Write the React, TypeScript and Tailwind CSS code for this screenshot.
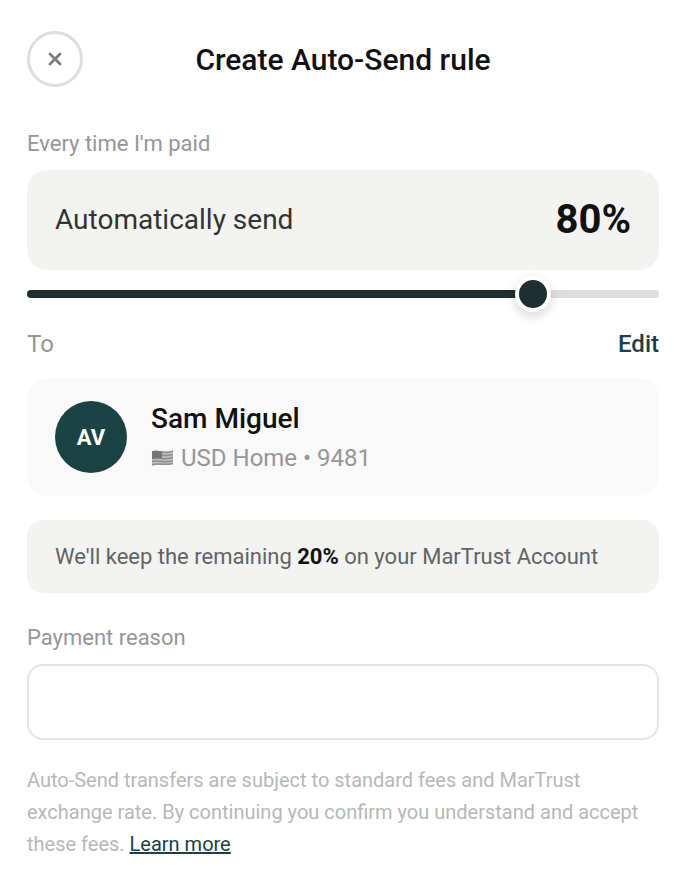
import React from 'react'

const percent = 80

const Flag = () => {
  return (
    <svg className="h-[16px] w-[22px]" viewBox="0 0 22 16">
      <path d="M1 1.2 C4 .4 7 .6 11 1.2 S18 1.4 22 .4 V14 C18 15.2 15 15 11 14.6 S4 14.6 1 15.8Z" fill="#bcbcbc" />
      <path d="M1 2 C4 1.2 7 1.4 11 2 S18 2.2 22 1.2 M1 5.2 C4 4.4 7 4.6 11 5.2 S18 5.4 22 4.4 M1 8.4 C4 7.6 7 7.8 11 8.4 S18 8.6 22 7.6 M1 11.6 C4 10.8 7 11 11 11.6 S18 11.8 22 10.8 M1 14.8 C4 13.8 7 13.8 11 14.2 S18 14.4 22 13.4" stroke="#8f8f8f" strokeWidth="1.5" fill="none" />
      <path d="M1 1.2 C4 .4 7 .6 11 1.2 V8.6 C7 8 4 8 1 9Z" fill="#757575" />
    </svg>
  )
}

const App = () => {
  return (
    <div className="h-[894px] w-[676px] bg-white pl-[27px] pr-[17px] pt-[31px] font-[Roboto,sans-serif]">
      <header className="grid h-14 grid-cols-[56px_1fr_56px] items-center">
        <button className="flex size-14 items-center justify-center rounded-full border-3 border-[#dedede]">
          <svg className="size-[14px]" viewBox="0 0 14 14" fill="none" stroke="#7c7c7c" strokeWidth="2.8" strokeLinecap="round">
            <path d="M2 2 12 12M12 2 2 12" />
          </svg>
        </button>
        <h1 className="whitespace-nowrap pt-0.5 text-center text-[30px] leading-10 font-medium text-[#111]">Create Auto-Send rule</h1>
      </header>

      <div className="mt-[41px] text-[22px] leading-[32px] text-[#969696]">Every time I'm paid</div>
      <div className="mt-[10px] flex h-[100px] items-center justify-between rounded-[20px] bg-[#f3f3f2] px-7">
        <span className="text-[28px] text-[#333]">Automatically send</span>
        <span className="text-[40px] font-bold text-[#111]">{percent}%</span>
      </div>

      <div className="relative mt-5 h-2 rounded-full bg-[#dedede]">
        <div className="h-2 rounded-full bg-[#1e2f32]" style={{ width: `${percent}%` }} />
        <div className="absolute top-1/2 size-9 -translate-x-1/2 -translate-y-1/2 rounded-full border-4 border-white bg-[#1e2f32] shadow-[0_4px_12px_rgba(0,0,0,0.16)]" style={{ left: `${percent}%` }} />
      </div>

      <div className="mt-[30px] flex h-8 items-center justify-between text-[24px]">
        <span className="text-[#969696]">To</span>
        <span className="font-medium text-[#1b4142]">Edit</span>
      </div>
      <div className="mt-[18px] flex h-[118px] items-center gap-6 rounded-[20px] bg-[#f9f9f9] px-7">
        <div className="flex size-[72px] items-center justify-center rounded-full bg-[#1c4344] text-[22px] font-bold text-white">AV</div>
        <div className="pt-0.5">
          <div className="text-[28px] font-medium leading-[40px] text-[#111]">Sam Miguel</div>
          <div className="flex items-center gap-[8px] text-[24px] leading-[38px] text-[#969696]">
            <Flag />
            <span>USD Home • 9481</span>
          </div>
        </div>
      </div>

      <div className="mt-6 flex h-[73px] items-center rounded-[16px] bg-[#f3f3f2] px-7 text-[22px] text-[#626365]">
        <p>We'll keep the remaining <b className="text-[#111]">20%</b> on your MarTrust Account</p>
      </div>

      <div className="mt-[29px] text-[22px] leading-[32px] text-[#969696]">Payment reason</div>
      <input className="mt-[10px] block h-[76px] w-full rounded-[16px] border-2 border-[#e5e5e5] px-7 text-[22px] outline-none" />

      <p className="mt-[24px] text-[20px] leading-8 text-[#b8b8b8]">
        Auto-Send transfers are subject to standard fees and MarTrust exchange rate. By continuing you confirm you understand and accept these fees. <a className="text-[#1b4142] underline">Learn more</a>
      </p>
    </div>
  )
}

export default App
